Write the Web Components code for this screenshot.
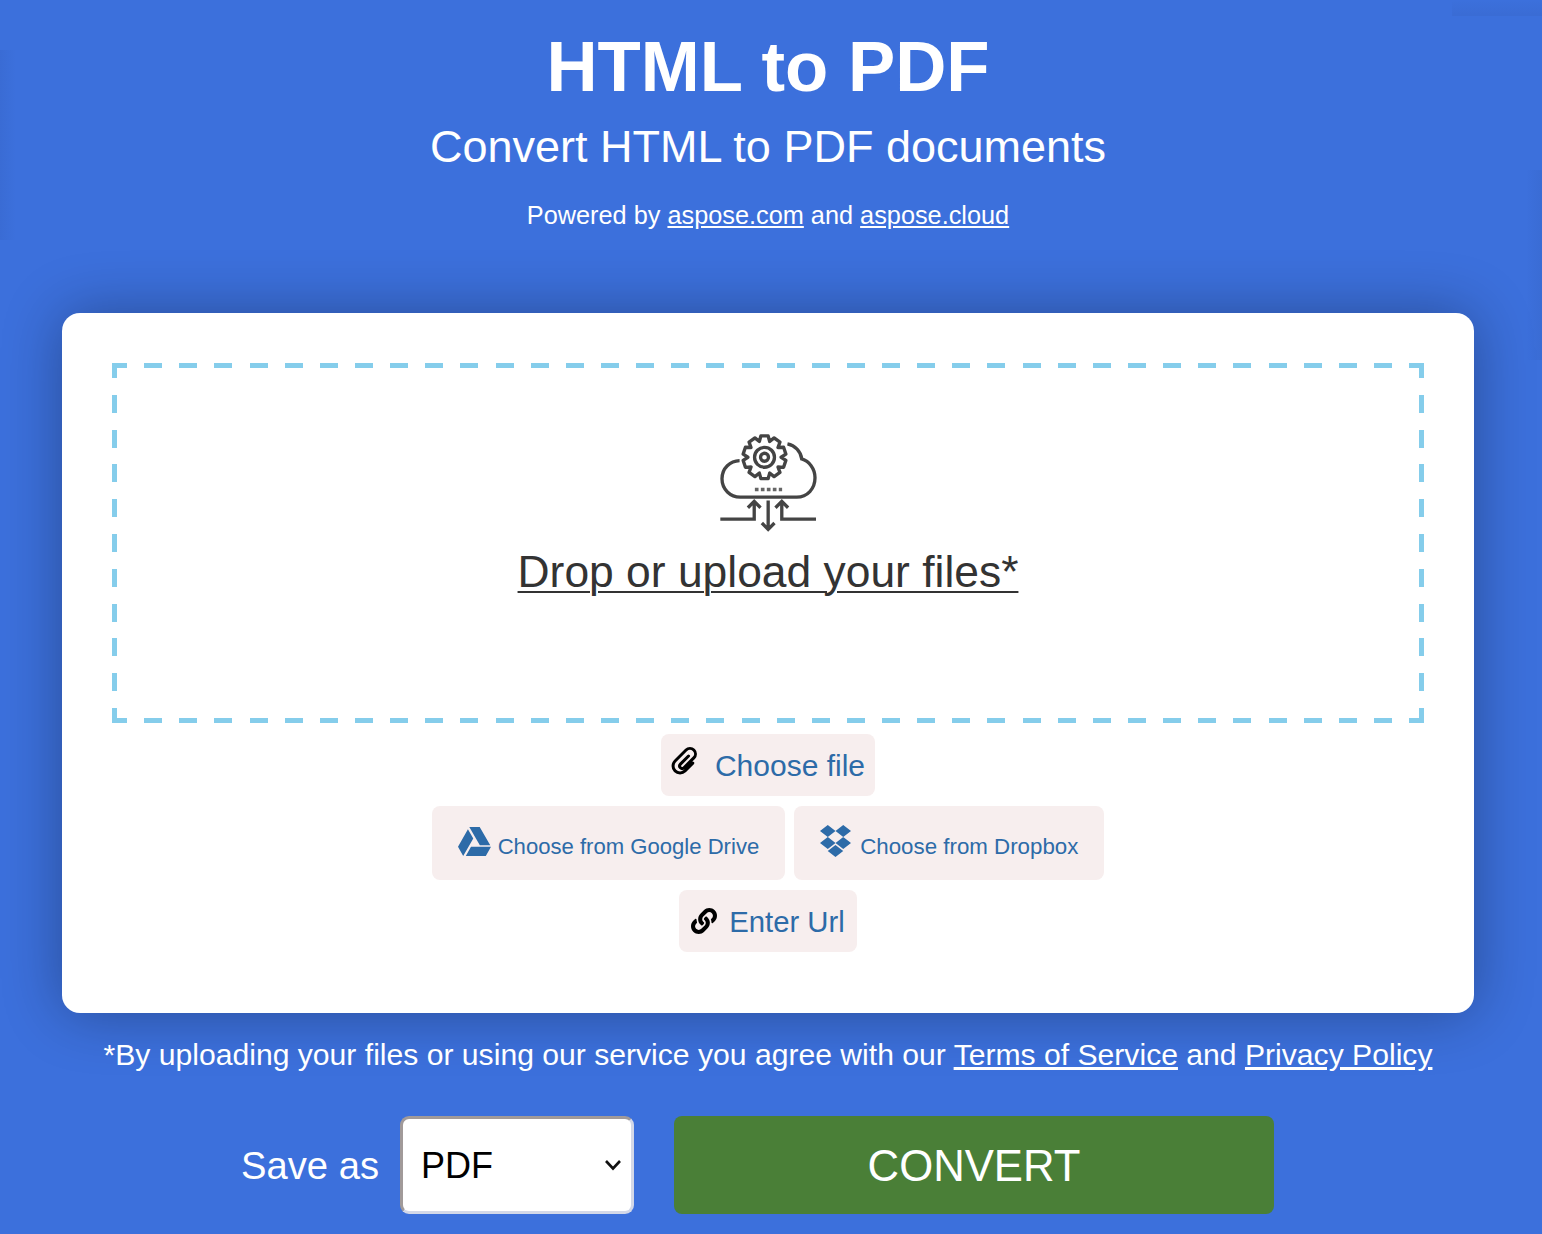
<!DOCTYPE html>
<html lang="en">
<head>
<meta charset="utf-8">
<title>HTML to PDF</title>
<style>
  html, body { margin: 0; padding: 0; height: 1234px; overflow: hidden; }
  body { background: #3c70dc; font-family: "Liberation Sans", Arial, sans-serif; color: #fff; }
  app-header a, terms-note a { color: #fff; text-decoration: underline; }
  .picks { display: flex; flex-direction: column; align-items: center; gap: 10px; margin-top: 11px; }
  .picks div { display: flex; gap: 9px; }
</style>
</head>
<body>
<app-page>
  <app-header slot="header">
    <span slot="title">HTML to PDF</span>
    <span slot="subtitle">Convert HTML to PDF documents</span>
    <span slot="powered">Powered by <a href="#">aspose.com</a> and <a href="#">aspose.cloud</a></span>
  </app-header>
  <upload-card slot="card">
    <drop-zone>Drop or upload your files*</drop-zone>
    <div class="picks">
      <pick-button icon="clip">Choose file</pick-button>
      <div>
        <pick-button icon="drive">Choose from Google Drive</pick-button>
        <pick-button icon="dropbox">Choose from Dropbox</pick-button>
      </div>
      <pick-button icon="link">Enter Url</pick-button>
    </div>
  </upload-card>
  <terms-note slot="terms">*By uploading your files or using our service you agree with our <a href="#">Terms of Service</a> and <a href="#">Privacy Policy</a></terms-note>
  <save-bar slot="save"></save-bar>
</app-page>

<script>
const ICONS = {
  clip: `<svg viewBox="-16 -16 32 32" width="32" height="32" fill="none" stroke="#000" stroke-width="3" stroke-linecap="round">
    <path transform="rotate(45)" d="M7-4V7a7 7 0 0 1-14 0V-8.500a5.500 5.500 0 0 1 11 0V5.500a2.500 2.500 0 0 1-5 0V-6"/></svg>`,
  drive: `<svg viewBox="0 0 512 512" width="33" height="33" fill="#2d6ba8"><path d="M339 314.9L175.4 32h161.2l163.6 282.9H339zm-137.5 23.6L120.9 480h310.5L512 338.5H201.5zM154.1 67.4L0 338.5 80.6 480 237 208.800 154.100 67.400z"/></svg>`,
  dropbox: `<svg viewBox="0 32 528 448" width="31" height="32" preserveAspectRatio="none" fill="#2d6ba8"><path d="M264.400 116.300l-132 84.300 132 84.300-132 84.300L0 284.100l132.300-84.300L0 116.300 132.300 32l132.100 84.300zM131.600 395.700l132-84.300 132 84.300-132 84.300-132-84.300zm132.800-111.600l132-84.300-132-83.600L395.700 32 528 116.300l-132.300 84.300L528 284.800l-132.300 84.300-131.300-85z"/></svg>`,
  link: `<svg viewBox="0 0 512 512" width="26" height="26" fill="#000"><path d="M326.612 185.391c59.747 59.809 58.927 155.698.36 214.59-.11.12-.24.25-.36.37l-67.2 67.2c-59.27 59.27-155.699 59.262-214.96 0-59.27-59.26-59.27-155.7 0-214.96l37.106-37.106c9.84-9.84 26.786-3.3 27.294 10.606.648 17.722 3.826 35.527 9.69 52.721 1.986 5.822.567 12.262-3.783 16.612l-13.087 13.087c-28.026 28.026-28.905 73.66-1.155 101.96 28.024 28.579 74.086 28.749 102.325.51l67.2-67.19c28.191-28.191 28.073-73.757 0-101.83-3.701-3.694-7.429-6.564-10.341-8.569a16.037 16.037 0 0 1-6.947-12.606c-.396-10.567 3.348-21.456 11.698-29.806l21.054-21.055c5.521-5.521 14.182-6.199 20.584-1.731a152.482 152.482 0 0 1 20.522 17.197zM467.547 44.449c-59.261-59.262-155.69-59.27-214.96 0l-67.2 67.2c-.12.12-.25.25-.36.37-58.566 58.892-59.387 154.781.36 214.59a152.454 152.454 0 0 0 20.521 17.196c6.402 4.468 15.064 3.789 20.584-1.731l21.054-21.055c8.35-8.35 12.094-19.239 11.698-29.806a16.037 16.037 0 0 0-6.947-12.606c-2.912-2.005-6.64-4.875-10.341-8.569-28.073-28.073-28.191-73.639 0-101.83l67.2-67.19c28.239-28.239 74.3-28.069 102.325.51 27.75 28.3 26.872 73.934-1.155 101.96l-13.087 13.087c-4.35 4.35-5.769 10.79-3.783 16.612 5.864 17.194 9.042 34.999 9.69 52.721.509 13.906 17.454 20.446 27.294 10.606l37.106-37.106c59.271-59.259 59.271-155.699.001-214.959z"/></svg>`
};

// per-icon button metrics, read off the reference
const BUTTONS = {
  clip: {h: 62, left: 8, right: 10, gap: 14, font: 30, icBottom: 8, txTop: 2},
  drive: {h: 74, left: 26, right: 26, gap: 7, font: 22.1, icBottom: 4, txTop: 8},
  dropbox: {h: 74, left: 26, right: 26, gap: 9, font: 22.3, icBottom: 4, txTop: 8},
  link: {h: 62, left: 12, right: 12, gap: 12, font: 29.3, icBottom: 0, txTop: 2}
};

// gear outline for the cloud icon, coordinates are in the icon's viewBox
function gearPath(cx, cy, outer, inner, teeth) {
  const pts = [];
  const step = Math.PI * 2 / teeth;
  for (let i = 0; i < teeth; i++) {
    const a = i * step - Math.PI / 2;
    [[-.5, inner], [-.27, outer], [.27, outer], [.5, inner]].forEach(([k, r]) => {
      pts.push((cx + r * Math.cos(a + k * step)).toFixed(1) + ' ' + (cy + r * Math.sin(a + k * step)).toFixed(1));
    });
  }
  return 'M' + pts.join('L') + 'Z';
}

class AppPage extends HTMLElement {
  constructor() {
    super();
    this.attachShadow({mode: 'open'}).innerHTML = `
      <style>
        :host { display: block; width: 1542px; height: 1234px; overflow: hidden;
          background:
            linear-gradient(90deg, rgba(30, 50, 110, .07), transparent) 0 50px / 16px 190px no-repeat,
            linear-gradient(270deg, rgba(30, 50, 110, .07), transparent) right 170px / 16px 190px no-repeat,
            linear-gradient(0deg, rgba(30, 50, 110, .07), transparent) right 0 / 90px 16px no-repeat;
        }
        .wrap { display: flex; flex-direction: column; width: 1536px; box-sizing: border-box; padding: 0 62px; }
      </style>
      <div class="wrap">
        <slot name="header"></slot>
        <slot name="card"></slot>
        <slot name="terms"></slot>
        <slot name="save"></slot>
      </div>`;
  }
}
customElements.define('app-page', AppPage);

class AppHeader extends HTMLElement {
  constructor() {
    super();
    this.attachShadow({mode: 'open'}).innerHTML = `
      <style>
        :host { display: flex; flex-direction: column; align-items: center; height: 313px; color: #fff; }
        .title { font-size: 70.800px; font-weight: bold; line-height: 86px; margin-top: 24px; }
        .sub { font-size: 45px; line-height: 50px; margin-top: 12px; }
        .pow { font-size: 25.300px; line-height: 30px; margin-top: 28px; }
        ::slotted(span) { display: block; }
      </style>
      <div class="title"><slot name="title"></slot></div>
      <div class="sub"><slot name="subtitle"></slot></div>
      <div class="pow"><slot name="powered"></slot></div>`;
  }
}
customElements.define('app-header', AppHeader);

class UploadCard extends HTMLElement {
  constructor() {
    super();
    this.attachShadow({mode: 'open'}).innerHTML = `
      <style>
        :host {
          display: block; box-sizing: border-box; height: 700px; padding: 50px;
          background: #fff; border-radius: 18px;
          box-shadow: 0 0 60px rgba(0, 0, 0, .32);
        }
      </style>
      <slot></slot>`;
  }
}
customElements.define('upload-card', UploadCard);

class DropZone extends HTMLElement {
  constructor() {
    super();
    const c = '#85cdeb';
    const across = dir => `repeating-linear-gradient(${dir}, ${c} -3px 15px, transparent 15px 32.140px)`;
    const down = dir => `repeating-linear-gradient(${dir}, ${c} -3px 15px, transparent 15px 31.800px)`;
    this.attachShadow({mode: 'open'}).innerHTML = `
      <style>
        :host {
          display: flex; flex-direction: column; align-items: center; box-sizing: border-box;
          height: 360px; padding-top: 71px;
          background:
            ${across('90deg')} left top / 100% 5px no-repeat,
            ${across('90deg')} left bottom / 100% 5px no-repeat,
            ${down('180deg')} left top / 5px 100% no-repeat,
            ${down('180deg')} right top / 5px 100% no-repeat;
        }
        svg { display: block; }
        .text {
          font-size: 44.400px; line-height: 50px; color: #333; margin-top: 15px;
          text-decoration: underline; text-decoration-thickness: 2px; text-underline-offset: 4px;
        }
      </style>
      <svg viewBox="120 40 290 295" width="97" height="98" fill="none" stroke="#444" stroke-width="10">
        <path d="M178 120C150 121 125 142 125 175C125 207 150 230 180 230H350C382 230 405 205 405 172C405 143 387 122 365 115C362 92 345 75 322 70"/>
        <path d="${gearPath(253, 110, 65, 50, 10)}" stroke-linejoin="round"/>
        <circle cx="253" cy="110" r="30"/>
        <circle cx="253" cy="110" r="12"/>
        <path d="M224 207H306" stroke="#666" stroke-dasharray="11 7" stroke-width="10"/>
        <path d="M120 296H222V243M203 262L222 243L241 262"/>
        <path d="M408 296H305V243M286 262L305 243L324 262"/>
        <path d="M264 240V325M245 308L264 327L283 308"/>
      </svg>
      <div class="text"><slot></slot></div>`;
  }
}
customElements.define('drop-zone', DropZone);

class PickButton extends HTMLElement {
  constructor() {
    super();
    this.attachShadow({mode: 'open'});
  }

  connectedCallback() {
    const icon = this.getAttribute('icon');
    const b = BUTTONS[icon];
    this.shadowRoot.innerHTML = `
      <style>
        :host {
          display: inline-flex; align-items: center; gap: ${b.gap}px; box-sizing: border-box;
          height: ${b.h}px; padding: 0 ${b.right}px 0 ${b.left}px;
          background: #f7eeee; border-radius: 8px; color: #2d6ba8; font-size: ${b.font}px;
        }
        .ic { display: flex; padding-bottom: ${b.icBottom}px; }
        .tx { white-space: nowrap; padding-top: ${b.txTop}px; }
      </style>
      <span class="ic">${ICONS[icon]}</span><span class="tx"><slot></slot></span>`;
  }
}
customElements.define('pick-button', PickButton);

class TermsNote extends HTMLElement {
  constructor() {
    super();
    this.attachShadow({mode: 'open'}).innerHTML = `
      <style>
        :host { display: block; height: 103px; padding-top: 24px; box-sizing: border-box; text-align: center; font-size: 30.130px; line-height: 36px; color: #fff; white-space: nowrap; }
      </style>
      <slot></slot>`;
  }
}
customElements.define('terms-note', TermsNote);

class SaveBar extends HTMLElement {
  constructor() {
    super();
    this.attachShadow({mode: 'open'}).innerHTML = `
      <style>
        :host { display: flex; align-items: center; height: 98px; padding-left: 179px; color: #fff; }
        .lbl { font-size: 38.200px; width: 159px; flex: none; padding-top: 2px; }
        .sel { position: relative; flex: none; width: 234px; height: 98px; margin-right: 40px; }
        select {
          appearance: none; -webkit-appearance: none; display: block; width: 100%; height: 100%;
          box-sizing: border-box; background: #fff; color: #000;
          border: 3px solid; border-color: #a19a99 #d3d8e8 #d3d8e8 #a19a99; border-radius: 9px;
          padding: 0 0 0 18px; font: 36px "Liberation Sans", Arial, sans-serif;
        }
        .sel svg { position: absolute; right: 12px; top: 43px; pointer-events: none; }
        button {
          flex: none; width: 600px; height: 98px; border: 0; border-radius: 8px; padding: 2px 0 0;
          background: #4a7f37; color: #fff; font: 43.700px "Liberation Sans", Arial, sans-serif;
        }
      </style>
      <span class="lbl">Save as</span>
      <div class="sel">
        <select><option>PDF</option></select>
        <svg viewBox="0 0 18 12" width="18" height="12" fill="none" stroke="#111" stroke-width="2.600"><path d="M2 2L9 9.500L16 2"/></svg>
      </div>
      <button>CONVERT</button>`;
  }
}
customElements.define('save-bar', SaveBar);
</script>
</body>
</html>
